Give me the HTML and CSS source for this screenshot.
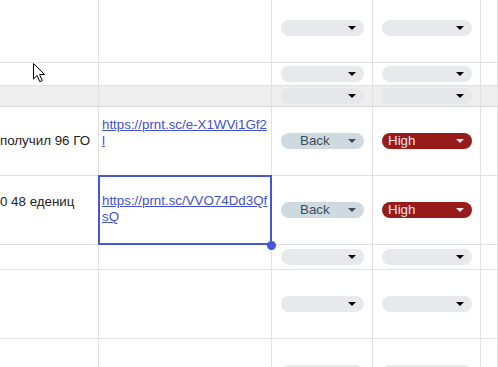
FILE: index.html
```html
<!DOCTYPE html>
<html>
<head>
<meta charset="utf-8">
<link rel="stylesheet" href="styles.css">
</head>
<body>
<div class="sheet">
  <!-- row A -->
  <div class="cell"></div>
  <div class="cell"></div>
  <div class="cell chipcell"><span class="chip empty"><i class="arrow"></i></span></div>
  <div class="cell chipcell"><span class="chip empty"><i class="arrow"></i></span></div>
  <div class="cell"></div>
  <!-- row B -->
  <div class="cell"></div>
  <div class="cell"></div>
  <div class="cell chipcell"><span class="chip empty"><i class="arrow"></i></span></div>
  <div class="cell chipcell"><span class="chip empty"><i class="arrow"></i></span></div>
  <div class="cell"></div>
  <!-- row C (grey band) -->
  <div class="cell band"></div>
  <div class="cell band"></div>
  <div class="cell band chipcell"><span class="chip empty"><i class="arrow"></i></span></div>
  <div class="cell band chipcell"><span class="chip empty"><i class="arrow"></i></span></div>
  <div class="cell band"></div>
  <!-- row D -->
  <div class="cell text text-d"><span class="clip">получил 96 ГО</span></div>
  <div class="cell linkcell link-d"><a href="#">https://prnt.sc/e-X1WVi1Gf2l</a></div>
  <div class="cell chipcell"><span class="chip back">Back<i class="arrow"></i></span></div>
  <div class="cell chipcell"><span class="chip high">High<i class="arrow"></i></span></div>
  <div class="cell"></div>
  <!-- row E -->
  <div class="cell text text-e"><span class="clip">0 48 едениц</span></div>
  <div class="cell linkcell link-e selected"><a href="#">https://prnt.sc/VVO74Dd3QfsQ</a><span class="sel-box"></span><span class="sel-dot"></span></div>
  <div class="cell chipcell"><span class="chip back">Back<i class="arrow"></i></span></div>
  <div class="cell chipcell"><span class="chip high">High<i class="arrow"></i></span></div>
  <div class="cell"></div>
  <!-- row F -->
  <div class="cell"></div>
  <div class="cell"></div>
  <div class="cell chipcell"><span class="chip empty"><i class="arrow"></i></span></div>
  <div class="cell chipcell"><span class="chip empty"><i class="arrow"></i></span></div>
  <div class="cell"></div>
  <!-- row G -->
  <div class="cell"></div>
  <div class="cell"></div>
  <div class="cell chipcell"><span class="chip empty"><i class="arrow"></i></span></div>
  <div class="cell chipcell"><span class="chip empty"><i class="arrow"></i></span></div>
  <div class="cell"></div>
  <!-- row H -->
  <div class="cell"></div>
  <div class="cell"></div>
  <div class="cell chipcell"><span class="chip empty"><i class="arrow"></i></span></div>
  <div class="cell chipcell"><span class="chip empty"><i class="arrow"></i></span></div>
  <div class="cell"></div>
</div>
<svg class="cursor" width="14" height="21" viewBox="0 0 14 21">
  <path d="M0.5 0.5 L0.5 16 L4.2 12.4 L6.8 18.6 L9.2 17.6 L6.6 11.5 L11.6 11.5 Z" fill="#ffffff" stroke="#000000" stroke-width="1" stroke-linejoin="miter"/>
</svg>
</body>
</html>
```
FILE: styles.css
```css
html, body {
  margin: 0;
  padding: 0;
  background: #ffffff;
  overflow: hidden;
}

body {
  width: 498px;
  height: 367px;
  position: relative;
  font-family: "Liberation Sans", Arial, sans-serif;
  font-size: 13.33px;
  color: #222222;
}

.sheet {
  display: grid;
  grid-template-columns: 99px 173px 101px 108px 1fr;
  grid-template-rows: 69px 23px 21px 69px 69px 25px 69px 69px;
  margin-top: -6px;
  height: 373px;
  overflow: hidden;
}

.cell {
  box-sizing: border-box;
  border-right: 1px solid #e1e1e1;
  border-bottom: 1px solid #e1e1e1;
  min-width: 0;
  position: relative;
}

.band {
  background: #eeeeee;
  border-bottom-color: #d6d6d6;
}

.text {
  white-space: nowrap;
  overflow: hidden;
  line-height: 16px;
}

.clip {
  display: block;
}

.text-d { padding-top: 26px; }
.text-e { padding-top: 18px; }

.linkcell {
  padding: 0 2px 0 3px;
  line-height: 16px;
  word-break: break-all;
}

.linkcell a {
  color: #3f50d2;
  text-decoration: underline;
}

.link-d { padding-top: 10px; }
.link-e { padding-top: 17px; }

.selected { z-index: 2; }

.sel-box {
  position: absolute;
  left: -1px;
  top: -1px;
  width: 174px;
  height: 70px;
  box-sizing: border-box;
  border: 2px solid #4656d8;
}

.sel-dot {
  position: absolute;
  left: 168px;
  top: 65px;
  width: 9px;
  height: 9px;
  border-radius: 50%;
  background: #4656d8;
}

.chipcell {
  display: flex;
  align-items: center;
  padding: 0 8px 0 9px;
}

.chip {
  display: flex;
  align-items: center;
  width: 100%;
  height: 16px;
  border-radius: 8px;
  box-sizing: border-box;
  line-height: 16px;
  white-space: nowrap;
}

.chip.empty {
  background: #e8e9ec;
}

.band .chip.empty {
  background: #e6e7ea;
}

.chip.back {
  background: #cfdae0;
  color: #3c4e5b;
  padding-left: 19px;
}

.chip.high {
  background: #971b1b;
  color: #f6e3e3;
  padding-left: 6px;
}

.arrow {
  display: block;
  margin-left: auto;
  margin-right: 8px;
  width: 0;
  height: 0;
  border-left: 4px solid transparent;
  border-right: 4px solid transparent;
  border-top: 4px solid #000000;
}

.chip.back .arrow { border-top-color: #3c4e5b; }
.chip.high .arrow { border-top-color: #f6e3e3; }

.cursor {
  position: absolute;
  left: 33px;
  top: 63px;
}
```
